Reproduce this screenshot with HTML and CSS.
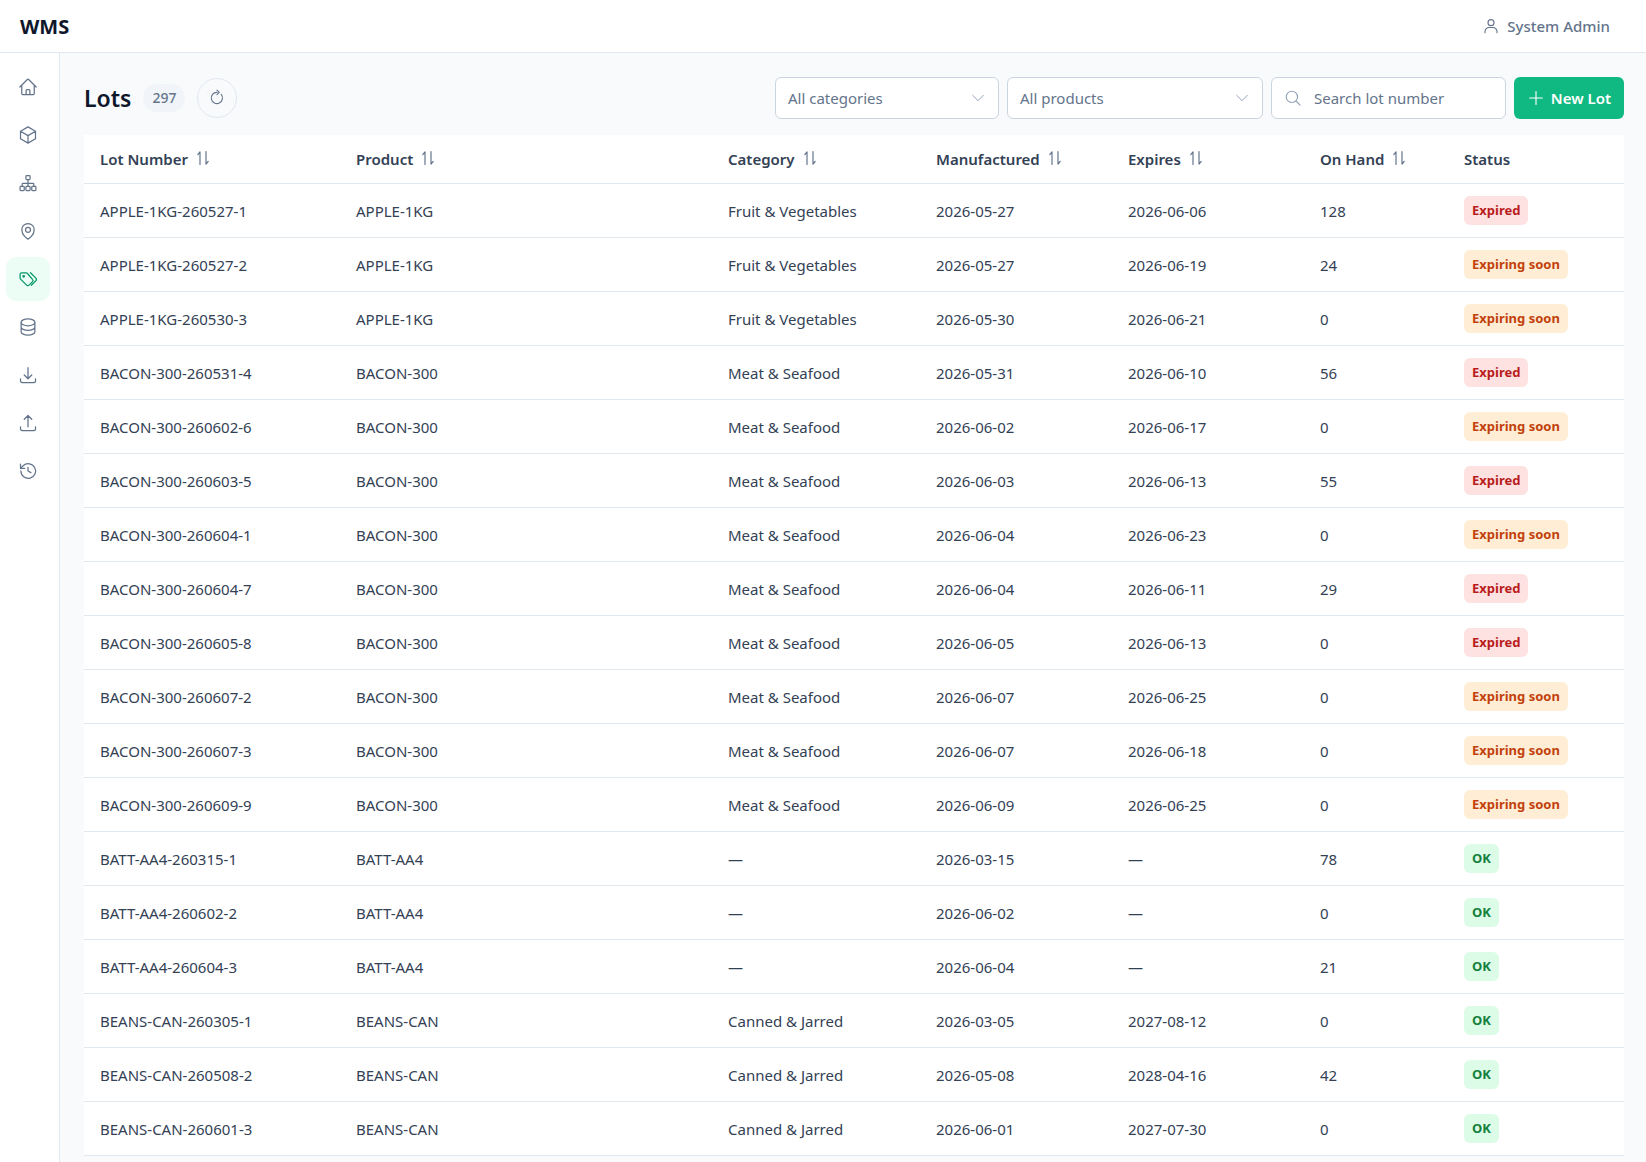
FILE: index.html
```html
<!DOCTYPE html>
<html lang="en">
  <head>
    <meta charset="UTF-8" />
    <title>Lots - WMS</title>
    <link rel="stylesheet" href="styles.css">
  </head>
  <body>
    <svg class="sprite" width="0" height="0">
      <symbol id="sort" viewBox="0 0 16 16"><path d="M5 14.5V2M5 2 2.8 4.6M11 1.5V14M11 14l2.2-2.6"/></symbol>
    </svg>
    <header class="topbar">
      <div class="logo">WMS</div>
      <div class="user">
        <svg class="icon-user" viewBox="0 0 24 24"><circle cx="12" cy="7.5" r="4"/><path d="M4 21v-1.5a5.5 5.5 0 0 1 5.5-5.5h5a5.5 5.5 0 0 1 5.5 5.5V21"/></svg>
        <span>System Admin</span>
      </div>
    </header>

    <div class="layout">
      <nav class="sidebar">
        <a class="nav-item"><svg viewBox="0 0 24 24"><path d="m2.25 12 8.954-8.955c.44-.439 1.152-.439 1.591 0L21.75 12M4.5 9.75v10.125c0 .621.504 1.125 1.125 1.125H9.75v-4.875c0-.621.504-1.125 1.125-1.125h2.25c.621 0 1.125.504 1.125 1.125V21h4.125c.621 0 1.125-.504 1.125-1.125V9.75M8.25 21h8.25"/></svg></a>
        <a class="nav-item"><svg viewBox="0 0 24 24"><path d="m21 7.5-9-5.25L3 7.5m18 0-9 5.25m9-5.25v9l-9 5.25M3 7.5l9 5.25M3 7.5v9l9 5.25m0-9v9"/></svg></a>
        <a class="nav-item"><svg viewBox="0 0 24 24"><rect x="9.5" y="3" width="5" height="5" rx="1"/><rect x="2.5" y="16" width="5" height="5" rx="1"/><rect x="9.5" y="16" width="5" height="5" rx="1"/><rect x="16.5" y="16" width="5" height="5" rx="1"/><path d="M12 8v8M5 16v-2.5a1 1 0 0 1 1-1h12a1 1 0 0 1 1 1V16"/></svg></a>
        <a class="nav-item"><svg viewBox="0 0 24 24"><path d="M15 10.5a3 3 0 1 1-6 0 3 3 0 0 1 6 0Z"/><path d="M19.5 10.5c0 7.142-7.5 11.25-7.5 11.25S4.5 17.642 4.5 10.5a7.5 7.5 0 1 1 15 0Z"/></svg></a>
        <a class="nav-item active"><svg viewBox="0 0 24 24"><path d="M2.5 6.5v4.2c0 .5.2 1 .6 1.4l7.3 7.3c.8.8 2 .8 2.8 0l4.2-4.2c.8-.8.8-2 0-2.8L11.1 5.1c-.4-.4-.9-.6-1.4-.6H4.5a2 2 0 0 0-2 2Z"/><circle cx="6.8" cy="8.8" r=".9"/><path d="m15 4.5 6.2 6.2c1.1 1.1 1.1 2.5 0 3.6L16 19.5"/></svg></a>
        <a class="nav-item"><svg viewBox="0 0 24 24"><path d="M20.25 6.375c0 2.278-3.694 4.125-8.25 4.125S3.75 8.653 3.75 6.375m16.5 0c0-2.278-3.694-4.125-8.25-4.125S3.75 4.097 3.75 6.375m16.5 0v11.25c0 2.278-3.694 4.125-8.25 4.125s-8.25-1.847-8.25-4.125V6.375m16.5 0v5.625c0 2.278-3.694 4.125-8.25 4.125S3.75 14.278 3.75 12V6.375"/></svg></a>
        <a class="nav-item"><svg viewBox="0 0 24 24"><path d="M3 16.5v2.25A2.25 2.25 0 0 0 5.25 21h13.5A2.25 2.25 0 0 0 21 18.75V16.5M16.5 12 12 16.5m0 0L7.5 12m4.5 4.5V3"/></svg></a>
        <a class="nav-item"><svg viewBox="0 0 24 24"><path d="M3 16.5v2.25A2.25 2.25 0 0 0 5.25 21h13.5A2.25 2.25 0 0 0 21 18.75V16.5m-13.5-9L12 3m0 0 4.5 4.5M12 3v13.5"/></svg></a>
        <a class="nav-item"><svg viewBox="0 0 24 24"><path d="M3.5 12a8.8 8.8 0 1 0 2.7-6.3L3 8.8"/><path d="M3 3.8v5h5"/><path d="M12 7.5V12l3.5 2"/></svg></a>
      </nav>

      <main class="content">
        <div class="toolbar">
          <div class="title-group">
            <h1>Lots</h1>
            <span class="count">297</span>
            <button class="refresh"><svg viewBox="0 0 24 24"><path d="M17.6 7.2A7.5 7.5 0 1 1 12 4.5"/><path d="M12 1.5 15 4.5 12 7.5"/></svg></button>
          </div>
          <div class="filters">
            <div class="select select-category">All categories<svg viewBox="0 0 24 24"><path d="m4 8 8 8 8-8"/></svg></div>
            <div class="select select-product">All products<svg viewBox="0 0 24 24"><path d="m4 8 8 8 8-8"/></svg></div>
            <div class="search">
              <svg viewBox="0 0 24 24"><circle cx="10.5" cy="10.5" r="7.5"/><path d="m16 16 5.5 5.5"/></svg>
              <span>Search lot number</span>
            </div>
            <button class="new-lot"><svg viewBox="0 0 24 24"><path d="M12 3.5v17M3.5 12h17"/></svg>New Lot</button>
          </div>
        </div>

        <table class="lots">
          <colgroup>
            <col class="c-lot"><col class="c-product"><col class="c-category"><col class="c-date"><col class="c-date"><col class="c-hand"><col class="c-status">
          </colgroup>
          <thead>
            <tr>
              <th>Lot Number<svg class="sort"><use href="#sort"/></svg></th>
              <th>Product<svg class="sort"><use href="#sort"/></svg></th>
              <th>Category<svg class="sort"><use href="#sort"/></svg></th>
              <th>Manufactured<svg class="sort"><use href="#sort"/></svg></th>
              <th>Expires<svg class="sort"><use href="#sort"/></svg></th>
              <th>On Hand<svg class="sort"><use href="#sort"/></svg></th>
              <th>Status</th>
            </tr>
          </thead>
          <tbody>
            <tr><td>APPLE-1KG-260527-1</td><td>APPLE-1KG</td><td>Fruit &amp; Vegetables</td><td>2026-05-27</td><td>2026-06-06</td><td>128</td><td><span class="badge expired">Expired</span></td></tr>
            <tr><td>APPLE-1KG-260527-2</td><td>APPLE-1KG</td><td>Fruit &amp; Vegetables</td><td>2026-05-27</td><td>2026-06-19</td><td>24</td><td><span class="badge soon">Expiring soon</span></td></tr>
            <tr><td>APPLE-1KG-260530-3</td><td>APPLE-1KG</td><td>Fruit &amp; Vegetables</td><td>2026-05-30</td><td>2026-06-21</td><td>0</td><td><span class="badge soon">Expiring soon</span></td></tr>
            <tr><td>BACON-300-260531-4</td><td>BACON-300</td><td>Meat &amp; Seafood</td><td>2026-05-31</td><td>2026-06-10</td><td>56</td><td><span class="badge expired">Expired</span></td></tr>
            <tr><td>BACON-300-260602-6</td><td>BACON-300</td><td>Meat &amp; Seafood</td><td>2026-06-02</td><td>2026-06-17</td><td>0</td><td><span class="badge soon">Expiring soon</span></td></tr>
            <tr><td>BACON-300-260603-5</td><td>BACON-300</td><td>Meat &amp; Seafood</td><td>2026-06-03</td><td>2026-06-13</td><td>55</td><td><span class="badge expired">Expired</span></td></tr>
            <tr><td>BACON-300-260604-1</td><td>BACON-300</td><td>Meat &amp; Seafood</td><td>2026-06-04</td><td>2026-06-23</td><td>0</td><td><span class="badge soon">Expiring soon</span></td></tr>
            <tr><td>BACON-300-260604-7</td><td>BACON-300</td><td>Meat &amp; Seafood</td><td>2026-06-04</td><td>2026-06-11</td><td>29</td><td><span class="badge expired">Expired</span></td></tr>
            <tr><td>BACON-300-260605-8</td><td>BACON-300</td><td>Meat &amp; Seafood</td><td>2026-06-05</td><td>2026-06-13</td><td>0</td><td><span class="badge expired">Expired</span></td></tr>
            <tr><td>BACON-300-260607-2</td><td>BACON-300</td><td>Meat &amp; Seafood</td><td>2026-06-07</td><td>2026-06-25</td><td>0</td><td><span class="badge soon">Expiring soon</span></td></tr>
            <tr><td>BACON-300-260607-3</td><td>BACON-300</td><td>Meat &amp; Seafood</td><td>2026-06-07</td><td>2026-06-18</td><td>0</td><td><span class="badge soon">Expiring soon</span></td></tr>
            <tr><td>BACON-300-260609-9</td><td>BACON-300</td><td>Meat &amp; Seafood</td><td>2026-06-09</td><td>2026-06-25</td><td>0</td><td><span class="badge soon">Expiring soon</span></td></tr>
            <tr><td>BATT-AA4-260315-1</td><td>BATT-AA4</td><td>—</td><td>2026-03-15</td><td>—</td><td>78</td><td><span class="badge ok">OK</span></td></tr>
            <tr><td>BATT-AA4-260602-2</td><td>BATT-AA4</td><td>—</td><td>2026-06-02</td><td>—</td><td>0</td><td><span class="badge ok">OK</span></td></tr>
            <tr><td>BATT-AA4-260604-3</td><td>BATT-AA4</td><td>—</td><td>2026-06-04</td><td>—</td><td>21</td><td><span class="badge ok">OK</span></td></tr>
            <tr><td>BEANS-CAN-260305-1</td><td>BEANS-CAN</td><td>Canned &amp; Jarred</td><td>2026-03-05</td><td>2027-08-12</td><td>0</td><td><span class="badge ok">OK</span></td></tr>
            <tr><td>BEANS-CAN-260508-2</td><td>BEANS-CAN</td><td>Canned &amp; Jarred</td><td>2026-05-08</td><td>2028-04-16</td><td>42</td><td><span class="badge ok">OK</span></td></tr>
            <tr><td>BEANS-CAN-260601-3</td><td>BEANS-CAN</td><td>Canned &amp; Jarred</td><td>2026-06-01</td><td>2027-07-30</td><td>0</td><td><span class="badge ok">OK</span></td></tr>
          </tbody>
        </table>
      </main>
    </div>
  </body>
</html>
```

FILE: styles.css
```css
html, body {
  height: 100%;
}
body {
  margin: 0;
  font-family: 'Noto Sans', sans-serif;
  font-size: 14px;
  color: #334155;
  background-color: #f8fafc;
  overflow: hidden;
}
svg {
  fill: none;
  stroke: currentColor;
  stroke-width: 1.5;
  stroke-linecap: round;
  stroke-linejoin: round;
  flex-shrink: 0;
}
.sprite {
  position: absolute;
}
.topbar {
  display: flex;
  justify-content: space-between;
  align-items: center;
  box-sizing: border-box;
  height: 53px;
  padding: 0 36px 0 20px;
  background-color: #fff;
  border-bottom: 1px solid #e2e8f0;
}
.logo {
  font-size: 20px;
  font-weight: 700;
  color: #0f172a;
}
.user {
  display: flex;
  align-items: center;
  gap: 7px;
  font-size: 15px;
  font-weight: 500;
  color: #64748b;
}
.icon-user {
  width: 18px;
  height: 18px;
}
.layout {
  display: flex;
  height: calc(100% - 53px);
}
.sidebar {
  display: flex;
  flex-direction: column;
  gap: 4px;
  box-sizing: border-box;
  width: 60px;
  padding: 12px 0 0 6px;
  background-color: #fff;
  border-right: 1px solid #e2e8f0;
  flex-shrink: 0;
}
.nav-item {
  display: flex;
  justify-content: center;
  align-items: center;
  width: 44px;
  height: 44px;
  border-radius: 10px;
  color: #64748b;
}
.nav-item svg {
  width: 20px;
  height: 20px;
}
.nav-item.active {
  background-color: #ecfdf5;
  color: #059669;
}
.content {
  flex: 1;
  padding: 24px 22px 0 24px;
  min-width: 0;
}
.toolbar {
  display: flex;
  justify-content: space-between;
  align-items: center;
  height: 42px;
  margin-bottom: 16px;
}
.title-group {
  display: flex;
  align-items: center;
  gap: 12px;
}
h1 {
  margin: 0;
  font-size: 23px;
  font-weight: 600;
  color: #0f172a;
}
.count {
  box-sizing: border-box;
  width: 42px;
  height: 28px;
  line-height: 28px;
  text-align: center;
  border-radius: 14px;
  background-color: #f1f5f9;
  font-weight: 500;
  color: #64748b;
}
.refresh {
  display: flex;
  justify-content: center;
  align-items: center;
  box-sizing: border-box;
  width: 40px;
  height: 40px;
  padding: 0;
  border: 1px solid #e2e8f0;
  border-radius: 50%;
  background: transparent;
  color: #64748b;
}
.refresh svg {
  width: 18px;
  height: 18px;
}
.filters {
  display: flex;
  gap: 8px;
}
.select, .search {
  display: flex;
  align-items: center;
  box-sizing: border-box;
  height: 42px;
  padding: 0 12px;
  background-color: #fff;
  border: 1px solid #cbd5e1;
  border-radius: 6px;
  color: #64748b;
  font-size: 15px;
}
.select {
  justify-content: space-between;
}
.select svg {
  width: 16px;
  height: 16px;
  color: #94a3b8;
}
.select-category {
  width: 224px;
}
.select-product {
  width: 256px;
}
.search {
  width: 235px;
  gap: 12px;
}
.search svg {
  width: 18px;
  height: 18px;
  color: #94a3b8;
}
.new-lot {
  display: flex;
  justify-content: center;
  align-items: center;
  gap: 6px;
  box-sizing: border-box;
  width: 110px;
  height: 42px;
  padding: 0;
  border: none;
  border-radius: 6px;
  background-color: #10b981;
  color: #fff;
  font-family: inherit;
  font-size: 15px;
  font-weight: 600;
}
.new-lot svg {
  width: 18px;
  height: 18px;
}
.lots {
  width: 1540px;
  table-layout: fixed;
  border-collapse: separate;
  border-spacing: 0;
  background-color: #fff;
}
.c-lot { width: 256px; }
.c-product { width: 372px; }
.c-category { width: 208px; }
.c-date { width: 192px; }
.c-hand { width: 144px; }
.c-status { width: 176px; }
.lots th, .lots td {
  box-sizing: border-box;
  padding: 0 16px;
  text-align: left;
  border-bottom: 1px solid #e2e8f0;
}
.lots th {
  height: 49px;
  font-size: 15px;
  font-weight: 600;
}
.lots td {
  height: 54px;
  font-size: 15px;
}
.sort {
  width: 16px;
  height: 16px;
  margin-left: 7px;
  vertical-align: -1px;
  color: #64748b;
  stroke-width: 1.2;
}
.badge {
  display: inline-block;
  padding: 0 8px;
  height: 29px;
  line-height: 29px;
  border-radius: 6px;
  font-size: 13px;
  font-weight: 700;
}
.expired {
  background-color: #fee2e2;
  color: #b91c1c;
}
.soon {
  background-color: #ffedd5;
  color: #c2410c;
}
.ok {
  background-color: #dcfce7;
  color: #15803d;
}
```
